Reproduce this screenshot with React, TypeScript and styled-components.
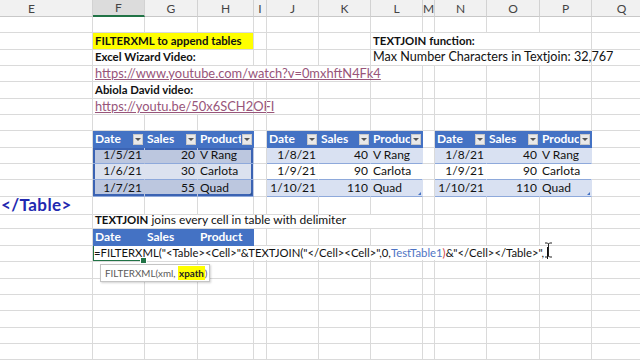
import styled, { createGlobalStyle, css } from 'styled-components';
import type { ReactNode } from 'react';

const GlobalStyle = createGlobalStyle`
  html, body {
    margin: 0;
    padding: 0;
    background: #ffffff;
    overflow: hidden;
  }
  body {
    font-family: Lato, "Liberation Sans", sans-serif;
  }
`;

const COLS = [
  { id: 'E', w: 122 },
  { id: 'F', w: 52 },
  { id: 'G', w: 53 },
  { id: 'H', w: 56 },
  { id: 'I', w: 13 },
  { id: 'J', w: 52 },
  { id: 'K', w: 52 },
  { id: 'L', w: 52 },
  { id: 'M', w: 12 },
  { id: 'N', w: 52 },
  { id: 'O', w: 53 },
  { id: 'P', w: 52 },
  { id: 'Q', w: 60 },
];

const GRID = '#dadada';
const BLUE = '#4472c4';
const BAND_LINE = '#8ea9db';

const Sheet = styled.div`
  width: 640px;
  height: 360px;
  overflow: hidden;
`;

const Scroller = styled.div`
  margin-left: -29px;
  display: flex;
  flex-direction: column;
`;

const Row = styled.div<{ $h?: number }>`
  display: grid;
  grid-template-columns: ${COLS.map((c) => `${c.w}px`).join(' ')};
  height: ${(p) => p.$h ?? 16.35}px;
`;

const ColHead = styled.div<{ $active?: boolean }>`
  display: flex;
  align-items: center;
  justify-content: center;
  font-size: 12px;
  color: #444;
  background: ${(p) => (p.$active ? '#dcdcdc' : '#f1f1f1')};
  border-right: 1px solid #d2d2d2;
  border-bottom: ${(p) => (p.$active ? '2px solid #217346' : '1px solid #c8c8c8')};
`;

const Cell = styled.div<{
  $span?: number;
  $align?: 'left' | 'right';
  $bold?: boolean;
  $bg?: string;
}>`
  position: relative;
  grid-column: span ${(p) => p.$span ?? 1};
  display: flex;
  align-items: flex-end;
  justify-content: ${(p) => (p.$align === 'right' ? 'flex-end' : 'flex-start')};
  padding: 0 2px 1px;
  min-width: 0;
  font-size: ${(p) => (p.$bold ? 11.4 : 12)}px;
  line-height: 14px;
  white-space: nowrap;
  color: #111;
  font-weight: ${(p) => (p.$bold ? 700 : 400)};
  background: ${(p) => p.$bg ?? 'transparent'};
  border-right: 1px solid ${GRID};
  border-bottom: 1px solid ${GRID};
`;

const Strong = styled.b`
  font-size: 11.4px;
  font-weight: 700;
`;

const Note = styled.span`
  font-size: 12.6px;
`;

const Link = styled.span`
  color: #98557a;
  font-size: 12.9px;
  text-decoration: underline;
  text-underline-offset: 1px;
`;

const BigTag = styled.span`
  font-size: 17px;
  line-height: 16px;
  font-weight: 700;
  color: #2228b0;
  margin-left: 28px;
  letter-spacing: 0.4px;
`;

const TableHead = styled(Cell)`
  background: ${BLUE};
  color: #ffffff;
  font-weight: 700;
  font-size: 12px;
  border-right-color: ${BLUE};
  border-bottom-color: ${BLUE};
  justify-content: space-between;
  align-items: center;
  padding: 0 1px 0 2px;
  overflow: hidden;
`;

const HeadText = styled.span`
  overflow: hidden;
  flex: 1 1 auto;
  min-width: 0;
`;

const FilterBtn = styled.span`
  flex: 0 0 auto;
  width: 10px;
  height: 11px;
  margin-left: 1px;
  background: #e9e9e9;
  border: 1px solid #c9c9c9;
  box-sizing: border-box;
  display: flex;
  align-items: center;
  justify-content: center;
  &::after {
    content: '';
    border-left: 3px solid transparent;
    border-right: 3px solid transparent;
    border-top: 3px solid #555;
  }
`;

const SEL = '#3b63b3';

const edgeShadow = (edges: string) => {
  const parts: string[] = [];
  if (edges.includes('t')) parts.push(`inset 0 2px 0 ${SEL}`);
  if (edges.includes('b')) parts.push(`inset 0 -2px 0 ${SEL}`);
  if (edges.includes('l')) parts.push(`inset 2px 0 0 ${SEL}`);
  if (edges.includes('r')) parts.push(`inset -2px 0 0 ${SEL}`);
  return parts.length ? parts.join(', ') : 'none';
};

const TableBody = styled(Cell)<{ $band: string; $edges?: string }>`
  background: ${(p) => p.$band};
  border-right-color: ${(p) => p.$band};
  border-bottom-color: ${BAND_LINE};
  ${(p) =>
    p.$edges &&
    css`
      box-shadow: ${edgeShadow(p.$edges)};
    `}
`;

const Corner = styled.span<{ $solid?: boolean }>`
  position: absolute;
  right: 1px;
  bottom: 1px;
  width: 0;
  height: 0;
  border-left: 3px solid transparent;
  border-bottom: 3px solid ${(p) => (p.$solid ? '#2f5597' : '#4472c4')};
`;

const EditCell = styled(Cell)`
  box-shadow: inset 0 0 0 2px #217346;
  overflow: visible;
  padding-left: 1px;
`;

const FillHandle = styled.span`
  position: absolute;
  right: -3px;
  bottom: -3px;
  width: 5px;
  height: 5px;
  background: #217346;
  border: 1px solid #fff;
  z-index: 3;
`;

const FormulaText = styled.span`
  position: relative;
  z-index: 2;
  background: #ffffff;
  padding-right: 4px;
  font-size: 11.3px;
  color: #111;
  display: flex;
  align-items: center;
`;

const Ref = styled.span`
  color: #4f74c4;
`;

const Paren = styled.span`
  color: #d0484a;
`;

const Caret = styled.span`
  display: inline-block;
  width: 1px;
  height: 12px;
  background: #111;
  margin-left: 3px;
`;

const Pointer = styled.svg`
  position: absolute;
  right: -1px;
  top: -4px;
`;

const Tooltip = styled.div`
  position: absolute;
  left: 7px;
  top: 2px;
  z-index: 4;
  height: 16px;
  padding: 0 2px 0 4px;
  display: flex;
  align-items: center;
  background: #ffffff;
  border: 1px solid #c4c4c4;
  box-shadow: 1px 1px 2px rgba(0, 0, 0, 0.18);
  font-size: 9.8px;
  color: #5a5a5a;
  white-space: nowrap;
`;

const Current = styled.span`
  background: #ffff00;
  color: #222;
  font-weight: 700;
  padding: 0 1px;
`;

const blanks = (n: number, key: string) =>
  Array.from({ length: n }, (_, i) => <Cell key={`${key}${i}`} />);

function EmptyRow() {
  return <Row>{blanks(13, 'b')}</Row>;
}

interface Record {
  date: string;
  sales: number;
  product: string;
}

const TABLE_A: Record[] = [
  { date: '1/5/21', sales: 20, product: 'V Rang' },
  { date: '1/6/21', sales: 30, product: 'Carlota' },
  { date: '1/7/21', sales: 55, product: 'Quad' },
];

const TABLE_B: Record[] = [
  { date: '1/8/21', sales: 40, product: 'V Rang' },
  { date: '1/9/21', sales: 90, product: 'Carlota' },
  { date: '1/10/21', sales: 110, product: 'Quad' },
];

function Head({ label }: { label: string }) {
  return (
    <TableHead>
      <HeadText>{label}</HeadText>
      <FilterBtn />
    </TableHead>
  );
}

function DataCells({
  rec,
  band,
  last,
  selected,
  first,
}: {
  rec: Record;
  band: string;
  last: boolean;
  first: boolean;
  selected?: boolean;
}) {
  const tb = `${selected && first ? 't' : ''}${selected && last ? 'b' : ''}`;
  return (
    <>
      <TableBody $band={band} $align="right" $edges={selected ? tb + 'l' : undefined}>
        {rec.date}
      </TableBody>
      <TableBody $band={band} $align="right" $edges={selected ? tb : undefined}>
        {rec.sales}
      </TableBody>
      <TableBody $band={band} $edges={selected ? tb + 'r' : undefined}>
        {rec.product}
        {last && <Corner $solid={selected} />}
      </TableBody>
    </>
  );
}

function TextRow({ children }: { children: ReactNode }) {
  return <Row>{children}</Row>;
}

export default function App() {
  const selBands = ['#bcc7df', '#dce2ef', '#bcc7df'];
  const bands = ['#d9e1f2', '#ffffff', '#d9e1f2'];

  return (
    <Sheet>
      <GlobalStyle />
      <Scroller>
        <Row $h={17}>
          {COLS.map((c) => (
            <ColHead key={c.id} $active={c.id === 'F'}>
              {c.id}
            </ColHead>
          ))}
        </Row>

        <EmptyRow />

        <TextRow>
          <Cell />
          <Cell $span={3} $bold $bg="#ffff00">
            FILTERXML to append tables
          </Cell>
          {blanks(3, 'a')}
          <Cell $span={5} $bold>
            TEXTJOIN function:
          </Cell>
          <Cell />
        </TextRow>

        <TextRow>
          <Cell />
          <Cell $span={3} $bold>
            Excel Wizard Video:
          </Cell>
          {blanks(3, 'a')}
          <Cell $span={5}>
            <Note>Max Number Characters in Textjoin: 32,767</Note>
          </Cell>
          <Cell />
        </TextRow>

        <TextRow>
          <Cell />
          <Cell $span={6}>
            <Link>https://www.youtube.com/watch?v=0mxhftN4Fk4</Link>
          </Cell>
          {blanks(6, 'a')}
        </TextRow>

        <TextRow>
          <Cell />
          <Cell $span={3} $bold>
            Abiola David video:
          </Cell>
          {blanks(9, 'a')}
        </TextRow>

        <TextRow>
          <Cell />
          <Cell $span={3}>
            <Link>https://youtu.be/50x6SCH2OFI</Link>
          </Cell>
          {blanks(9, 'a')}
        </TextRow>

        <EmptyRow />

        <Row>
          <Cell />
          <Head label="Date" />
          <Head label="Sales" />
          <Head label="Product" />
          <Cell />
          <Head label="Date" />
          <Head label="Sales" />
          <Head label="Product" />
          <Cell />
          <Head label="Date" />
          <Head label="Sales" />
          <Head label="Product" />
          <Cell />
        </Row>

        {TABLE_A.map((rec, i) => (
          <Row key={rec.date}>
            <Cell />
            <DataCells rec={rec} band={selBands[i]} first={i === 0} last={i === 2} selected />
            <Cell />
            <DataCells rec={TABLE_B[i]} band={bands[i]} first={i === 0} last={i === 2} />
            <Cell />
            <DataCells rec={TABLE_B[i]} band={bands[i]} first={i === 0} last={i === 2} />
            <Cell />
          </Row>
        ))}

        <TextRow>
          <Cell>
            <BigTag>&lt;/Table&gt;</BigTag>
          </Cell>
          {blanks(12, 'a')}
        </TextRow>

        <TextRow>
          <Cell />
          <Cell $span={7}>
            <Strong>TEXTJOIN</Strong>&nbsp;joins every cell in table with delimiter
          </Cell>
          {blanks(5, 'a')}
        </TextRow>

        <Row>
          <Cell />
          <TableHead>Date</TableHead>
          <TableHead>Sales</TableHead>
          <TableHead>Product</TableHead>
          {blanks(9, 'a')}
        </Row>

        <Row>
          <Cell />
          <EditCell>
            <FormulaText>
              =FILTERXML("&lt;Table&gt;&lt;Cell&gt;"&amp;TEXTJOIN("&lt;/Cell&gt;&lt;Cell&gt;",0,
              <Ref>TestTable1</Ref>
              <Paren>)</Paren>&amp;"&lt;/Cell&gt;&lt;/Table&gt;",
              <Caret />
              <Pointer width="9" height="16" viewBox="0 0 9 16">
                <path
                  d="M1 1h2.5l1 1 1-1H8M4.5 2v12M1 15h2.5l1-1 1 1H8"
                  fill="none"
                  stroke="#222"
                  strokeWidth="1"
                />
              </Pointer>
            </FormulaText>
            <FillHandle />
          </EditCell>
          {blanks(11, 'a')}
        </Row>

        <Row>
          <Cell />
          <Cell>
            <Tooltip>
              FILTERXML(xml,&nbsp;<Current>xpath</Current>)
            </Tooltip>
          </Cell>
          {blanks(11, 'a')}
        </Row>

        <EmptyRow />
        <EmptyRow />
        <EmptyRow />
        <EmptyRow />
        <EmptyRow />
        <EmptyRow />
      </Scroller>
    </Sheet>
  );
}
